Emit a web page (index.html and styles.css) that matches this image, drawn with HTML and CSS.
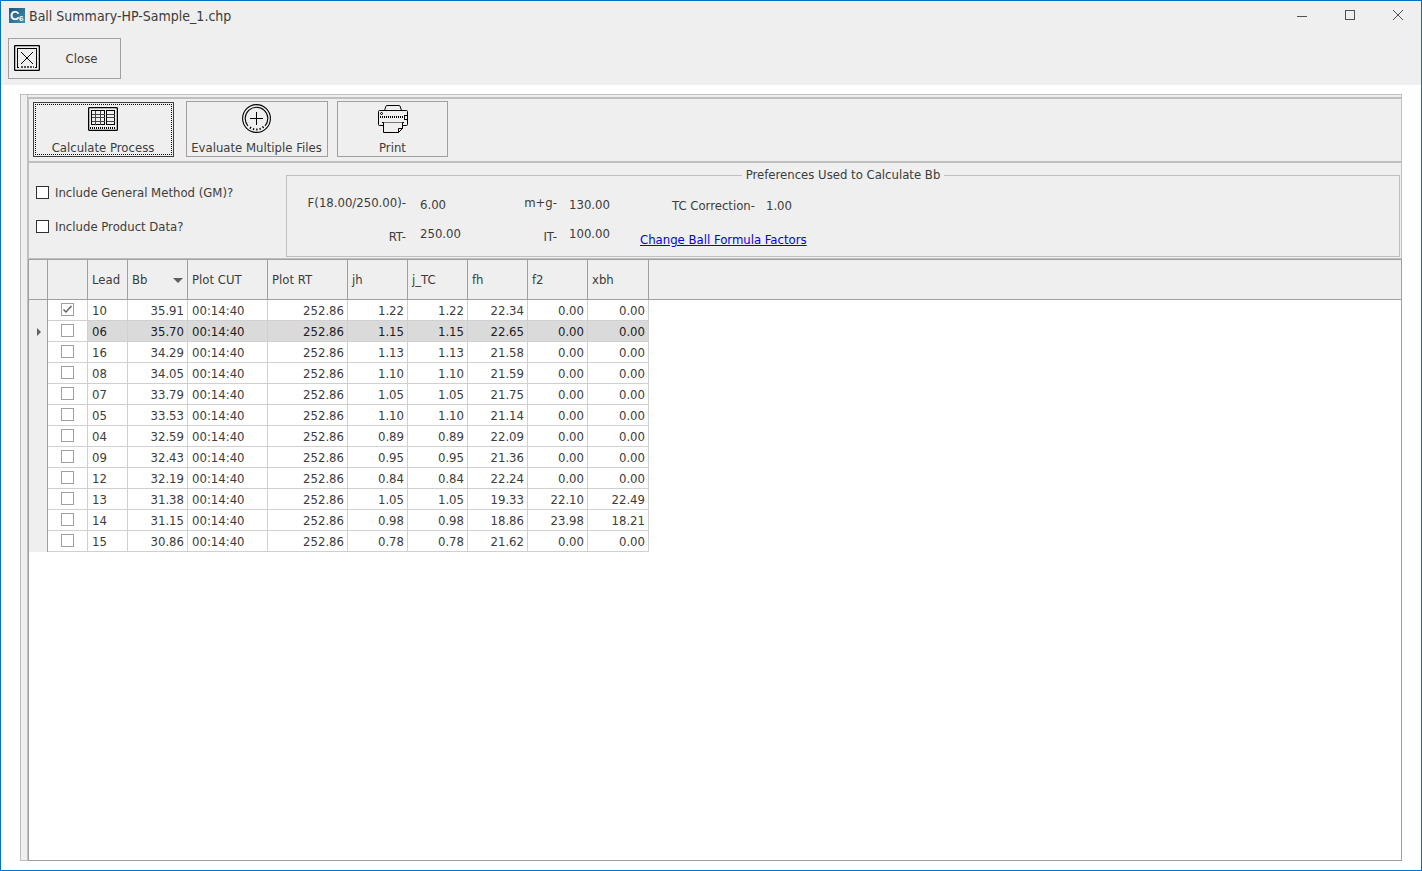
FILE: index.html
```html
<!DOCTYPE html>
<html lang="en">
<head>
  <meta charset="UTF-8"/>
  <meta name="viewport" content="width=device-width,initial-scale=1"/>
  <title>Ball Summary-HP-Sample_1.chp</title>
  <link rel="stylesheet" href="styles.css">
</head>
<body>
  <header class="titlebar">
    <svg class="logo" width="16" height="15" viewBox="0 0 16 15" aria-hidden="true">
      <defs>
        <linearGradient id="lg" x1="0" y1="0" x2="1" y2="1">
          <stop offset="0" stop-color="#1d5475"/>
          <stop offset="1" stop-color="#3d93b5"/>
        </linearGradient>
      </defs>
      <rect width="16" height="15" fill="url(#lg)"/>
      <text x="1" y="12" class="logo-c">C</text>
      <text x="10" y="13" class="logo-6">6</text>
    </svg>
    <h1>Ball Summary-HP-Sample_1.chp</h1>
    <div class="win-btns">
      <button aria-label="Minimize"><svg width="12" height="12"><path d="M1 7.5h10"/></svg></button>
      <button aria-label="Maximize"><svg width="12" height="12"><path d="M1.5 1.5h9v9h-9z"/></svg></button>
      <button aria-label="Close window"><svg width="12" height="12"><path class="smooth" d="M1 1l10 10M11 1L1 11"/></svg></button>
    </div>
  </header>
  <div class="actions">
    <button class="btn btn-close">
      <svg class="ico" width="26" height="26" viewBox="0 0 26 26">
        <rect class="smooth" x=".6" y=".6" width="24.8" height="24.8" rx="1" stroke-width="1.3"/>
        <path d="M5 22.5H3.5v-19h19v19H21"/>
        <path class="smooth" d="M7 7l12 12M19 7L7 19"/>
        <path d="M7 22h13" stroke-width="2" stroke-dasharray="2 1" stroke="#555"/>
      </svg>
      <span>Close</span>
    </button>
  </div>

  <main class="panel">
    <div class="gutter"></div>
    <div class="content">
      <div class="strip"></div>
      <nav class="toolbar">
        <button class="btn tool tool-calc focused">
          <svg class="ico" width="30" height="30" viewBox="0 0 30 30">
            <rect class="smooth" x=".6" y="2.6" width="28.8" height="22.8" rx="1" stroke-width="1.3"/>
            <rect x="3.5" y="5.5" width="13" height="14"/>
            <path stroke="#444" d="M7.5 5.5v14M12.5 5.5v14M3.5 9.5h13M3.5 12.5h13M3.5 16.5h13"/>
            <rect x="18.5" y="5.5" width="8" height="14"/>
            <path stroke="#444" d="M18.5 9.5h8M18.5 12.5h8M18.5 16.5h8"/>
            <path class="smooth" d="M2 23h26" stroke-width="2" stroke-dasharray="1 1"/>
          </svg>
          <span>Calculate Process</span>
        </button>
        <button class="btn tool tool-eval">
          <svg class="ico" width="30" height="30" viewBox="0 0 30 30">
            <circle class="smooth" cx="14.5" cy="14.5" r="13.9" stroke-width="1.1"/>
            <path class="smooth" d="M6 22a11.3 11.3 0 1 1 17 0" stroke-width="1.1"/>
            <path class="smooth" d="M8 23.4a11 11 0 0 0 14-1" stroke-width="2" stroke-dasharray="1.3 2"/>
            <path d="M8 14.5h13M14.5 8v13"/>
          </svg>
          <span>Evaluate Multiple Files</span>
        </button>
        <button class="btn tool tool-print">
          <svg class="ico" width="30" height="30" viewBox="0 0 30 30">
            <path class="smooth" d="M6.5 6.5L8 2q.3-.5 1-.5h12q.7 0 1 .5l1.5 4.5"/>
            <path class="smooth" d="M5.5 21.5h-4q-1 0-1-1v-13q0-1 1-1h27q1 0 1 1v13q0 1-1 1h-4"/>
            <path d="M4 18.5h22"/>
            <path class="smooth" d="M2 13h24" stroke-dasharray="1 1" stroke-width="2"/>
            <rect x="26.5" y="11.5" width="3" height="4" fill="#efefef"/>
            <circle class="smooth" cx="3.5" cy="9.5" r="1"/>
            <path class="smooth" d="M5.5 18.500v10h15l4-4v-6" fill="#efefef"/>
            <path class="smooth" d="M20.5 28.500v-4h4z"/>
          </svg>
          <span>Print</span>
        </button>
      </nav>

      <section class="options">
        <div class="checks">
          <label><input type="checkbox"> <span>Include General Method (GM)?</span></label>
          <label><input type="checkbox"> <span>Include Product Data?</span></label>
        </div>
        <fieldset>
          <legend>Preferences Used to Calculate Bb</legend>
          <div class="prefs">
            <div class="names names-f"><span>F(18.00/250.00)-</span><span>RT-</span></div>
            <div class="vals vals-f"><span>6.00</span><span>250.00</span></div>
            <div class="names names-m"><span>m+g-</span><span>IT-</span></div>
            <div class="vals vals-m"><span>130.00</span><span>100.00</span></div>
            <div class="factors">
              <div class="tc"><span>TC Correction-</span><span>1.00</span></div>
              <a href="#">Change Ball Formula Factors</a>
            </div>
          </div>
        </fieldset>
      </section>

      <div class="grid">
        <table>
          <colgroup>
            <col class="c-ind"><col class="c-40"><col class="c-40"><col class="c-60"><col class="c-80"><col class="c-80">
            <col class="c-60"><col class="c-60"><col class="c-60"><col class="c-60"><col class="c-last"><col>
          </colgroup>
          <thead>
            <tr>
              <th></th><th></th><th>Lead</th><th class="sorted" aria-sort="descending">Bb</th><th>Plot CUT</th><th>Plot RT</th>
              <th>jh</th><th>j_TC</th><th>fh</th><th>f2</th><th>xbh</th><th class="fill"></th>
            </tr>
          </thead>
          <tbody>
            <tr><td class="ind"></td><td class="pick"><input type="checkbox" aria-label="Lead 10" checked></td><td>10</td><td class="n">35.91</td><td>00:14:40</td><td class="n">252.86</td><td class="n">1.22</td><td class="n">1.22</td><td class="n">22.34</td><td class="n">0.00</td><td class="n">0.00</td><td class="fill"></td></tr>
            <tr class="current"><td class="ind"></td><td class="pick"><input type="checkbox" aria-label="Lead 06"></td><td>06</td><td class="n">35.70</td><td>00:14:40</td><td class="n">252.86</td><td class="n">1.15</td><td class="n">1.15</td><td class="n">22.65</td><td class="n">0.00</td><td class="n">0.00</td><td class="fill"></td></tr>
            <tr><td class="ind"></td><td class="pick"><input type="checkbox" aria-label="Lead 16"></td><td>16</td><td class="n">34.29</td><td>00:14:40</td><td class="n">252.86</td><td class="n">1.13</td><td class="n">1.13</td><td class="n">21.58</td><td class="n">0.00</td><td class="n">0.00</td><td class="fill"></td></tr>
            <tr><td class="ind"></td><td class="pick"><input type="checkbox" aria-label="Lead 08"></td><td>08</td><td class="n">34.05</td><td>00:14:40</td><td class="n">252.86</td><td class="n">1.10</td><td class="n">1.10</td><td class="n">21.59</td><td class="n">0.00</td><td class="n">0.00</td><td class="fill"></td></tr>
            <tr><td class="ind"></td><td class="pick"><input type="checkbox" aria-label="Lead 07"></td><td>07</td><td class="n">33.79</td><td>00:14:40</td><td class="n">252.86</td><td class="n">1.05</td><td class="n">1.05</td><td class="n">21.75</td><td class="n">0.00</td><td class="n">0.00</td><td class="fill"></td></tr>
            <tr><td class="ind"></td><td class="pick"><input type="checkbox" aria-label="Lead 05"></td><td>05</td><td class="n">33.53</td><td>00:14:40</td><td class="n">252.86</td><td class="n">1.10</td><td class="n">1.10</td><td class="n">21.14</td><td class="n">0.00</td><td class="n">0.00</td><td class="fill"></td></tr>
            <tr><td class="ind"></td><td class="pick"><input type="checkbox" aria-label="Lead 04"></td><td>04</td><td class="n">32.59</td><td>00:14:40</td><td class="n">252.86</td><td class="n">0.89</td><td class="n">0.89</td><td class="n">22.09</td><td class="n">0.00</td><td class="n">0.00</td><td class="fill"></td></tr>
            <tr><td class="ind"></td><td class="pick"><input type="checkbox" aria-label="Lead 09"></td><td>09</td><td class="n">32.43</td><td>00:14:40</td><td class="n">252.86</td><td class="n">0.95</td><td class="n">0.95</td><td class="n">21.36</td><td class="n">0.00</td><td class="n">0.00</td><td class="fill"></td></tr>
            <tr><td class="ind"></td><td class="pick"><input type="checkbox" aria-label="Lead 12"></td><td>12</td><td class="n">32.19</td><td>00:14:40</td><td class="n">252.86</td><td class="n">0.84</td><td class="n">0.84</td><td class="n">22.24</td><td class="n">0.00</td><td class="n">0.00</td><td class="fill"></td></tr>
            <tr><td class="ind"></td><td class="pick"><input type="checkbox" aria-label="Lead 13"></td><td>13</td><td class="n">31.38</td><td>00:14:40</td><td class="n">252.86</td><td class="n">1.05</td><td class="n">1.05</td><td class="n">19.33</td><td class="n">22.10</td><td class="n">22.49</td><td class="fill"></td></tr>
            <tr><td class="ind"></td><td class="pick"><input type="checkbox" aria-label="Lead 14"></td><td>14</td><td class="n">31.15</td><td>00:14:40</td><td class="n">252.86</td><td class="n">0.98</td><td class="n">0.98</td><td class="n">18.86</td><td class="n">23.98</td><td class="n">18.21</td><td class="fill"></td></tr>
            <tr><td class="ind"></td><td class="pick"><input type="checkbox" aria-label="Lead 15"></td><td>15</td><td class="n">30.86</td><td>00:14:40</td><td class="n">252.86</td><td class="n">0.78</td><td class="n">0.78</td><td class="n">21.62</td><td class="n">0.00</td><td class="n">0.00</td><td class="fill"></td></tr>
          </tbody>
        </table>
      </div>
    </div>
  </main>
</body>
</html>
```
FILE: styles.css
```css
:root {
  --bg: #efefef;
  --fg: #3c3c3c;
  --line: #bfbfbf;
  --dark: #a0a0a0;
  --cell: #d0d0d0;
  --accent: #0173c7;
}
* { box-sizing: border-box; }
body {
  margin: 0; height: 100vh; display: flex; flex-direction: column;
  border: 1px solid var(--accent); background: #fff; color: var(--fg);
  font: 13px/16px "DejaVu Sans Condensed", "Noto Sans", sans-serif;
}
button { font: inherit; color: inherit; background: none; border: 0; padding: 0; }

.titlebar { display: flex; align-items: center; height: 29px; padding-left: 8px; background: var(--bg); }
.titlebar h1 { margin: 0 auto 0 4px; font-size: 14px; font-weight: 400; line-height: 20px; }
.logo { flex: none; }
.logo-c { font: bold 13px "Liberation Sans", sans-serif; fill: #fff; }
.logo-6 { font: bold 8px "Liberation Sans", sans-serif; fill: #fff; }
.win-btns { display: flex; align-self: flex-start; margin-right: -1px; }
.win-btns button { width: 48px; height: 28px; display: flex; align-items: center; justify-content: center; }
.win-btns path { fill: none; stroke: #505050; shape-rendering: crispEdges; }

.actions { padding: 8px 7px 6px; background: var(--bg); }
.btn { border: 1px solid var(--dark); }
.btn-close { display: flex; align-items: center; width: 113px; height: 41px; padding-left: 5px; }
.btn-close span { flex: 1; padding-left: 3px; }
.btn-close .ico { margin-bottom: 2px; }
.ico { fill: none; stroke: #000; shape-rendering: crispEdges; flex: none; }
.ico .smooth, .win-btns path.smooth { shape-rendering: auto; }

.panel { flex: 1; display: flex; min-height: 0; margin: 9px 19px 9px; border-top: 1px solid var(--line); background: var(--bg); }
.gutter { width: 7px; border: solid var(--line); border-width: 0 0 1px 1px; }
.content { flex: 1; display: flex; flex-direction: column; min-width: 0; border-left: 1px solid var(--line); }
.strip { height: 3px; border: solid var(--line); border-width: 0 1px 1px 0; }

.toolbar { display: flex; align-items: flex-end; height: 64px; padding: 0 4px 4px; border: 1px solid var(--line); }
.tool { display: flex; flex-direction: column; align-items: center; justify-content: space-between; height: 56px; padding: 2px 0 0; white-space: nowrap; }
.tool-calc { width: 141px; padding-right: 1px; }
.tool-eval { width: 142px; margin: 0 9px 0 12px; padding-right: 1px; }
.tool-print { width: 111px; }
.focused { height: 55px; border-color: #404040; outline: 1px dotted #000; outline-offset: -3px; }

.options { display: flex; height: 97px; border: 1px solid var(--line); }
.checks { display: flex; flex-direction: column; gap: 17px; width: 257px; padding: 21px 0 0 7px; }
.checks label { display: flex; align-items: center; gap: 6px; }
.checks span { padding-top: 1px; }
input[type="checkbox"] { appearance: none; flex: none; width: 13px; height: 13px; margin: 0; border: 1px solid #303030; background: #fff; }
fieldset { flex: 1; min-width: 0; height: 90px; margin: 4px 1px 0 0; padding: 0; border: 1px solid var(--line); }
legend { margin: 0 auto; padding: 0 4px; }
.prefs { display: flex; }
.names { display: flex; flex-direction: column; gap: 18px; padding-top: 12px; text-align: right; white-space: nowrap; }
.vals { display: flex; flex-direction: column; gap: 13px; padding-top: 14px; }
.names-f { width: 119px; }
.vals-f { width: 80px; margin-left: 14px; }
.names-m { width: 57px; }
.vals-m { width: 71px; margin-left: 12px; }
.factors { display: flex; flex-direction: column; gap: 18px; padding-top: 15px; }
.tc { display: flex; gap: 11px; padding-left: 32px; }
a { color: #00e; }

.grid { flex: 1; min-height: 0; overflow: hidden; border: 1px solid var(--dark); background: #fff; }
table { width: 100%; table-layout: fixed; border-collapse: separate; border-spacing: 0; }
.c-ind { width: 19px; }
.c-40 { width: 40px; }
.c-60 { width: 60px; }
.c-80 { width: 80px; }
.c-last { width: 61px; }
th {
  height: 40px; padding: 0 4px; text-align: left; font-weight: 400; white-space: nowrap;
  background: var(--bg); border: solid var(--dark); border-width: 0 1px 1px 0;
}
th.fill { border-right: 0; }
.sorted::after { content: ""; float: right; margin-top: 6px; border: 5px solid transparent; border-top-color: #606060; border-bottom: 0; }
td { height: 21px; padding: 2px 3px 0 4px; line-height: 18px; border: solid var(--cell); border-width: 0 1px 1px 0; }
.n { text-align: right; }
td.fill { border: 0; }
td.ind { padding: 0 0 0 8px; background: var(--bg); border-color: var(--dark); border-bottom: 0; }
td.pick { padding: 0; }
.pick input[type="checkbox"] { display: block; margin: -1px auto 0; border-color: var(--dark); }
.pick input:checked { background: #fff url("data:image/svg+xml,%3Csvg xmlns='http://www.w3.org/2000/svg' width='11' height='11'%3E%3Cpath d='M1.5 5.5l2.5 2.5l5.5-6' fill='none' stroke='%23606060' stroke-width='1.5'/%3E%3C/svg%3E"); }
.current td:not(.ind):not(.pick):not(.fill) { background: #dadada; color: #202020; }
.current .ind::before { content: ""; display: block; width: 0; border: 4px solid transparent; border-left-color: #606060; border-right: 0; }
```
